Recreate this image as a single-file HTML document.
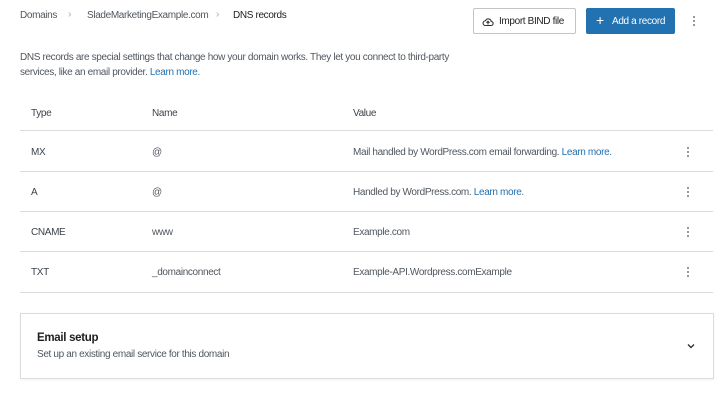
<!DOCTYPE html>
<html><head><meta charset="utf-8"><style>
*{box-sizing:border-box;margin:0;padding:0}
body{width:728px;height:400px;background:#fff;font-family:"Liberation Sans",sans-serif;color:#1e1e1e;position:relative;overflow:hidden;font-size:10px;letter-spacing:-0.35px}
.a{position:absolute;white-space:nowrap}
.g{color:#50575e}
.t{color:#3c434a}
.l{color:#2271b1}
.line{position:absolute;left:20px;width:693px;height:1px;background:#dcdcde}
.dots{position:absolute;width:2px}
.dots i{display:block;width:2px;height:2px;background:#777;border-radius:1px;margin-bottom:2px}
</style></head><body>
<div class="a g" style="left:20px;top:10px">Domains</div>
<div class="a" style="left:68px;top:9px;color:#aaa">›</div>
<div class="a g" style="left:87px;top:10px">SladeMarketingExample.com</div>
<div class="a" style="left:216px;top:9px;color:#aaa">›</div>
<div class="a" style="left:233px;top:10px">DNS records</div>

<div class="a" style="left:473px;top:8px;width:103px;height:26px;border:1px solid #c3c4c7;border-radius:2px;"></div>
<svg class="a" style="left:482px;top:16px" width="12" height="12" viewBox="0 0 24 24"><path d="M6 19h12a4 4 0 0 0 .5-8A6 6 0 0 0 7 9.5 4.8 4.8 0 0 0 6 19z" fill="none" stroke="#333" stroke-width="2.2"/><path d="M12 17v-6M9 13.5l3-3 3 3" fill="none" stroke="#333" stroke-width="2.2"/></svg>
<div class="a" style="left:499px;top:16px">Import BIND file</div>
<div class="a" style="left:586px;top:8px;width:89px;height:26px;background:#2271b1;border-radius:2px"></div>
<div class="a" style="left:596px;top:12px;color:#fff;font-size:14px">+</div>
<div class="a" style="left:612px;top:16px;color:#fff">Add a record</div>
<div class="dots" style="left:693px;top:16px"><i></i><i></i><i></i></div>

<div class="a g" style="left:20px;top:52px">DNS records are special settings that change how your domain works. They let you connect to third-party</div>
<div class="a g" style="left:20px;top:67px">services, like an email provider. <span class="l">Learn more.</span></div>

<div class="a t" style="left:31px;top:108px">Type</div>
<div class="a t" style="left:152px;top:108px">Name</div>
<div class="a t" style="left:353px;top:108px">Value</div>
<div class="line" style="top:130px"></div>

<div class="a t" style="left:31px;top:147px">MX</div>
<div class="a g" style="left:152px;top:147px">@</div>
<div class="a g" style="left:353px;top:147px">Mail handled by WordPress.com email forwarding. <span class="l">Learn more.</span></div>
<div class="dots" style="left:687px;top:147px"><i></i><i></i><i></i></div>
<div class="line" style="top:171px"></div>

<div class="a t" style="left:31px;top:187px">A</div>
<div class="a g" style="left:152px;top:187px">@</div>
<div class="a g" style="left:353px;top:187px">Handled by WordPress.com. <span class="l">Learn more.</span></div>
<div class="dots" style="left:687px;top:187px"><i></i><i></i><i></i></div>
<div class="line" style="top:211px"></div>

<div class="a t" style="left:31px;top:227px">CNAME</div>
<div class="a g" style="left:152px;top:227px">www</div>
<div class="a g" style="left:353px;top:227px">Example.com</div>
<div class="dots" style="left:687px;top:227px"><i></i><i></i><i></i></div>
<div class="line" style="top:251px"></div>

<div class="a t" style="left:31px;top:267px">TXT</div>
<div class="a g" style="left:152px;top:267px">_domainconnect</div>
<div class="a g" style="left:353px;top:267px">Example-API.Wordpress.comExample</div>
<div class="dots" style="left:687px;top:267px"><i></i><i></i><i></i></div>
<div class="line" style="top:292px"></div>

<div class="a" style="left:20px;top:313px;width:694px;height:66px;border:1px solid #dcdcde;box-shadow:0 1px 2px rgba(0,0,0,.05)"></div>
<div class="a" style="left:37px;top:332px;font-size:11.5px;font-weight:bold;letter-spacing:-0.3px">Email setup</div>
<div class="a g" style="left:37px;top:349px">Set up an existing email service for this domain</div>
<svg class="a" style="left:686px;top:342px" width="10" height="8" viewBox="0 0 10 8"><path d="M2 2.5l3 3 3-3" fill="none" stroke="#333" stroke-width="1.4"/></svg>
</body></html>
